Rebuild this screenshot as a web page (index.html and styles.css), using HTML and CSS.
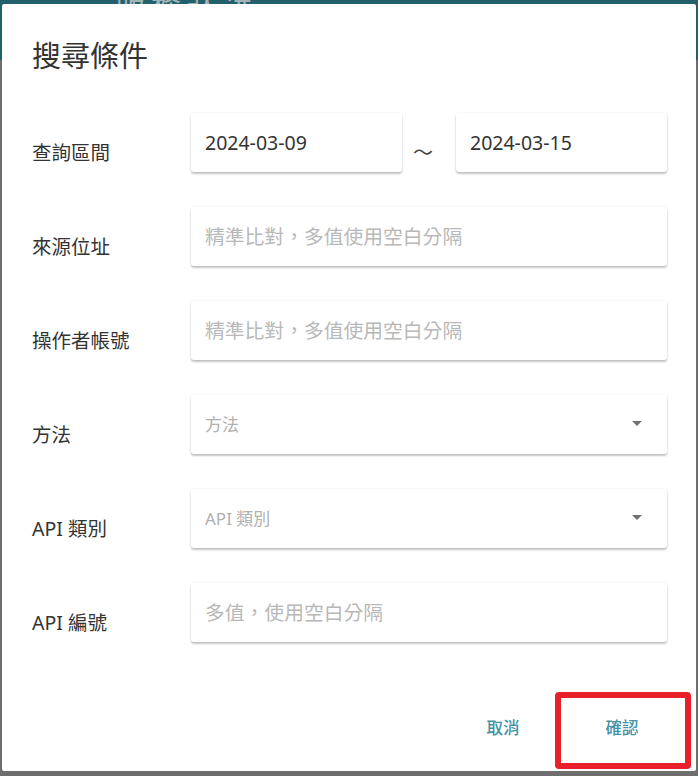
FILE: index.html
```html
<!DOCTYPE html>
<html lang="zh-Hant">
<head>
    <meta charset="UTF-8">
    <meta name="viewport" content="width=device-width, initial-scale=1.0">
    <title>搜尋條件</title>
    <link rel="stylesheet" href="styles.css">
</head>
<body>
    <div class="page-title">服務狀況</div>

    <div class="dialog">
        <h2 class="dialog-title">搜尋條件</h2>

        <form class="search-form">
            <div class="form-row">
                <label class="form-label">查詢區間</label>
                <div class="range">
                    <input class="field" type="text" value="2024-03-09">
                    <span class="range-sep">～</span>
                    <input class="field" type="text" value="2024-03-15">
                </div>
            </div>

            <div class="form-row">
                <label class="form-label">來源位址</label>
                <input class="field" type="text" placeholder="精準比對，多值使用空白分隔">
            </div>

            <div class="form-row">
                <label class="form-label">操作者帳號</label>
                <input class="field" type="text" placeholder="精準比對，多值使用空白分隔">
            </div>

            <div class="form-row">
                <label class="form-label">方法</label>
                <div class="field select">
                    <span class="select-placeholder">方法</span>
                    <span class="caret"></span>
                </div>
            </div>

            <div class="form-row">
                <label class="form-label">API 類別</label>
                <div class="field select">
                    <span class="select-placeholder">API 類別</span>
                    <span class="caret"></span>
                </div>
            </div>

            <div class="form-row">
                <label class="form-label">API 編號</label>
                <input class="field" type="text" placeholder="多值，使用空白分隔">
            </div>
        </form>

        <div class="dialog-actions">
            <button class="btn" type="button">取消</button>
            <button class="btn btn-confirm" type="button">確認</button>
        </div>
    </div>
</body>
</html>
```

FILE: styles.css
```css
body {
    margin: 0;
    padding: 4px 2px 5px 2px;
    font-family: 'Noto Sans', 'Noto Sans CJK TC', sans-serif;
    background: linear-gradient(#24606c 0 60px, #6e6e6e 60px);
    height: 776px;
    box-sizing: border-box;
    overflow: hidden;
    position: relative;
}

/* texto de la pagina detras del dialogo */
.page-title {
    position: absolute;
    top: -22px;
    left: 115px;
    font-size: 30px;
    color: #9fb3b8;
    letter-spacing: 6px;
}

.dialog {
    position: relative;
    background-color: #ffffff;
    border-radius: 2px;
    height: 767px;
    box-sizing: border-box;
    padding: 34px 29px 0 30px;
}

.dialog-title {
    margin: 0;
    font-size: 29px;
    line-height: 36px;
    font-weight: 400;
    color: #333333;
}

.search-form {
    margin-top: 39px;
    display: flex;
    flex-direction: column;
    gap: 35px;
}

.form-row {
    display: flex;
    align-items: center;
    height: 59px;
}

.form-label {
    width: 159px;
    flex-shrink: 0;
    padding-top: 18px;
    font-size: 19.5px;
    color: #333333;
}

.field {
    flex: 1;
    height: 59px;
    box-sizing: border-box;
    border: none;
    border-radius: 3px;
    background-color: #ffffff;
    box-shadow: 0 2px 2px rgba(0, 0, 0, 0.22), 0 0 3px rgba(0, 0, 0, 0.08);
    padding: 0 14px 0 14px;
    font-family: inherit;
    font-size: 19.5px;
    color: #333333;
    outline: none;
}

.field::placeholder {
    font-family: 'Noto Sans CJK TC', sans-serif;
    font-size: 19.8px;
    color: #b8b8b8;
}

.range {
    flex: 1;
    display: flex;
    align-items: center;
}

.range .field {
    width: 211px;
    flex: none;
}

.range-sep {
    flex: 1;
    text-align: center;
    padding: 18px 12px 0 0;
    font-size: 20px;
    color: #444444;
}

.select {
    display: flex;
    align-items: center;
    justify-content: space-between;
    padding-right: 25px;
}

.select-placeholder {
    font-size: 17px;
    color: #b0b0b0;
    margin-top: -2px;
}

.caret {
    width: 0;
    height: 0;
    border-left: 5px solid transparent;
    border-right: 5px solid transparent;
    border-top: 5px solid #707070;
    margin-top: -2px;
}

.dialog-actions {
    display: flex;
    justify-content: flex-end;
    gap: 19px;
    margin-top: 63px;
    margin-right: -5px;
}

.btn {
    width: 100px;
    height: 44px;
    border: none;
    background: none;
    font-family: 'Noto Sans CJK TC', sans-serif;
    font-size: 16.5px;
    font-weight: 500;
    color: #4393a8;
    cursor: pointer;
}

/* recuadro rojo de anotacion */
.btn-confirm {
    position: relative;
}

.btn-confirm::after {
    content: "";
    position: absolute;
    left: -17px;
    right: -19px;
    top: -13px;
    bottom: -20px;
    border: 6px solid #e8202a;
    border-radius: 4px;
}
```
